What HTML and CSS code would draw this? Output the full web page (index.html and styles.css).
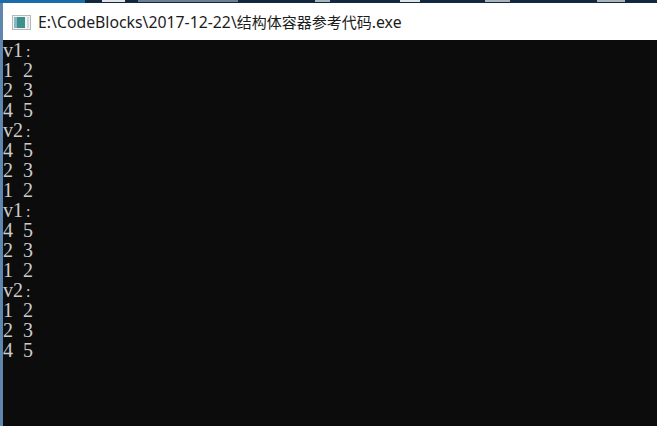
FILE: index.html
```html
<!DOCTYPE html>
<html lang="zh">
<head>
    <meta charset="UTF-8">
    <title>结构体容器参考代码</title>
    <link rel="stylesheet" href="styles.css">
</head>
<body>
    <div class="desktop-strip">
        <span class="strip-blue"></span>
        <span class="strip-bit bit-a"></span>
        <span class="strip-bit bit-b"></span>
        <span class="strip-bit bit-c"></span>
        <span class="strip-bit bit-d"></span>
        <span class="strip-bit bit-e"></span>
        <span class="strip-bit bit-f"></span>
    </div>
    <div class="window">
        <div class="titlebar">
            <svg class="app-icon" width="19" height="15" viewBox="0 0 19 15">
                <rect x="0.5" y="0.5" width="18" height="14" fill="#f2f4f4" stroke="#b4baba"/>
                <rect x="2" y="2" width="11" height="11" fill="#3f8f8c"/>
                <rect x="2" y="2" width="3" height="11" fill="#86b8c4"/>
                <rect x="15" y="2" width="2" height="11" fill="#d5dada"/>
            </svg>
            <span class="title">E:\CodeBlocks\2017-12-22\<span class="title-cjk">结构体容器参考代码</span>.exe</span>
        </div>
        <div class="console">
            <div class="line">v1<span class="colon">:</span></div>
            <div class="line">1 2</div>
            <div class="line">2 3</div>
            <div class="line">4 5</div>
            <div class="line">v2<span class="colon">:</span></div>
            <div class="line">4 5</div>
            <div class="line">2 3</div>
            <div class="line">1 2</div>
            <div class="line">v1<span class="colon">:</span></div>
            <div class="line">4 5</div>
            <div class="line">2 3</div>
            <div class="line">1 2</div>
            <div class="line">v2<span class="colon">:</span></div>
            <div class="line">1 2</div>
            <div class="line">2 3</div>
            <div class="line">4 5</div>
        </div>
    </div>
</body>
</html>
```

FILE: styles.css
```css
html, body {
    margin: 0;
    padding: 0;
    height: 426px;
    overflow: hidden;
    background: #0c0c0c;
}
body {
    display: flex;
    flex-direction: column;
}
.desktop-strip {
    height: 3px;
    flex: none;
    background: #12283f;
    display: flex;
}
.strip-blue {
    width: 85px;
    height: 3px;
    background: #1a6cab;
}
.strip-bit {
    height: 2px;
    background: #aab4bd;
}
.bit-a { width: 23px; margin-left: 17px; background: #dfe4e8; }
.bit-b { width: 100px; margin-left: 13px; background: #6d8093; }
.bit-c { width: 15px; margin-left: 77px; }
.bit-d { width: 20px; margin-left: 70px; background: #dfe4e8; }
.bit-e { width: 25px; margin-left: 65px; }
.bit-f { width: 28px; margin-left: 87px; }
.window {
    flex: 1;
    display: flex;
    flex-direction: column;
    border-left: 3px solid #5f86ad;
    min-height: 0;
}
.titlebar {
    height: 37px;
    flex: none;
    background: #fff;
    display: flex;
    align-items: center;
    gap: 7px;
    padding-left: 9px;
    padding-top: 1px;
    box-sizing: border-box;
}
.app-icon {
    flex: none;
}
.title {
    font-family: "Noto Sans", "Noto Sans CJK SC", sans-serif;
    font-size: 15.8px;
    color: #1c1c1c;
    white-space: nowrap;
}
.title-cjk {
    font-size: 15px;
}
.console {
    flex: 1;
    background: #0c0c0c;
    color: #cccccc;
    font-family: "Liberation Serif", serif;
    font-size: 20px;
    line-height: 20px;
    word-spacing: 5px;
}
.line {
    height: 20px;
    white-space: pre;
}
.colon {
    margin-left: 3px;
    font-size: 16px;
}
```
